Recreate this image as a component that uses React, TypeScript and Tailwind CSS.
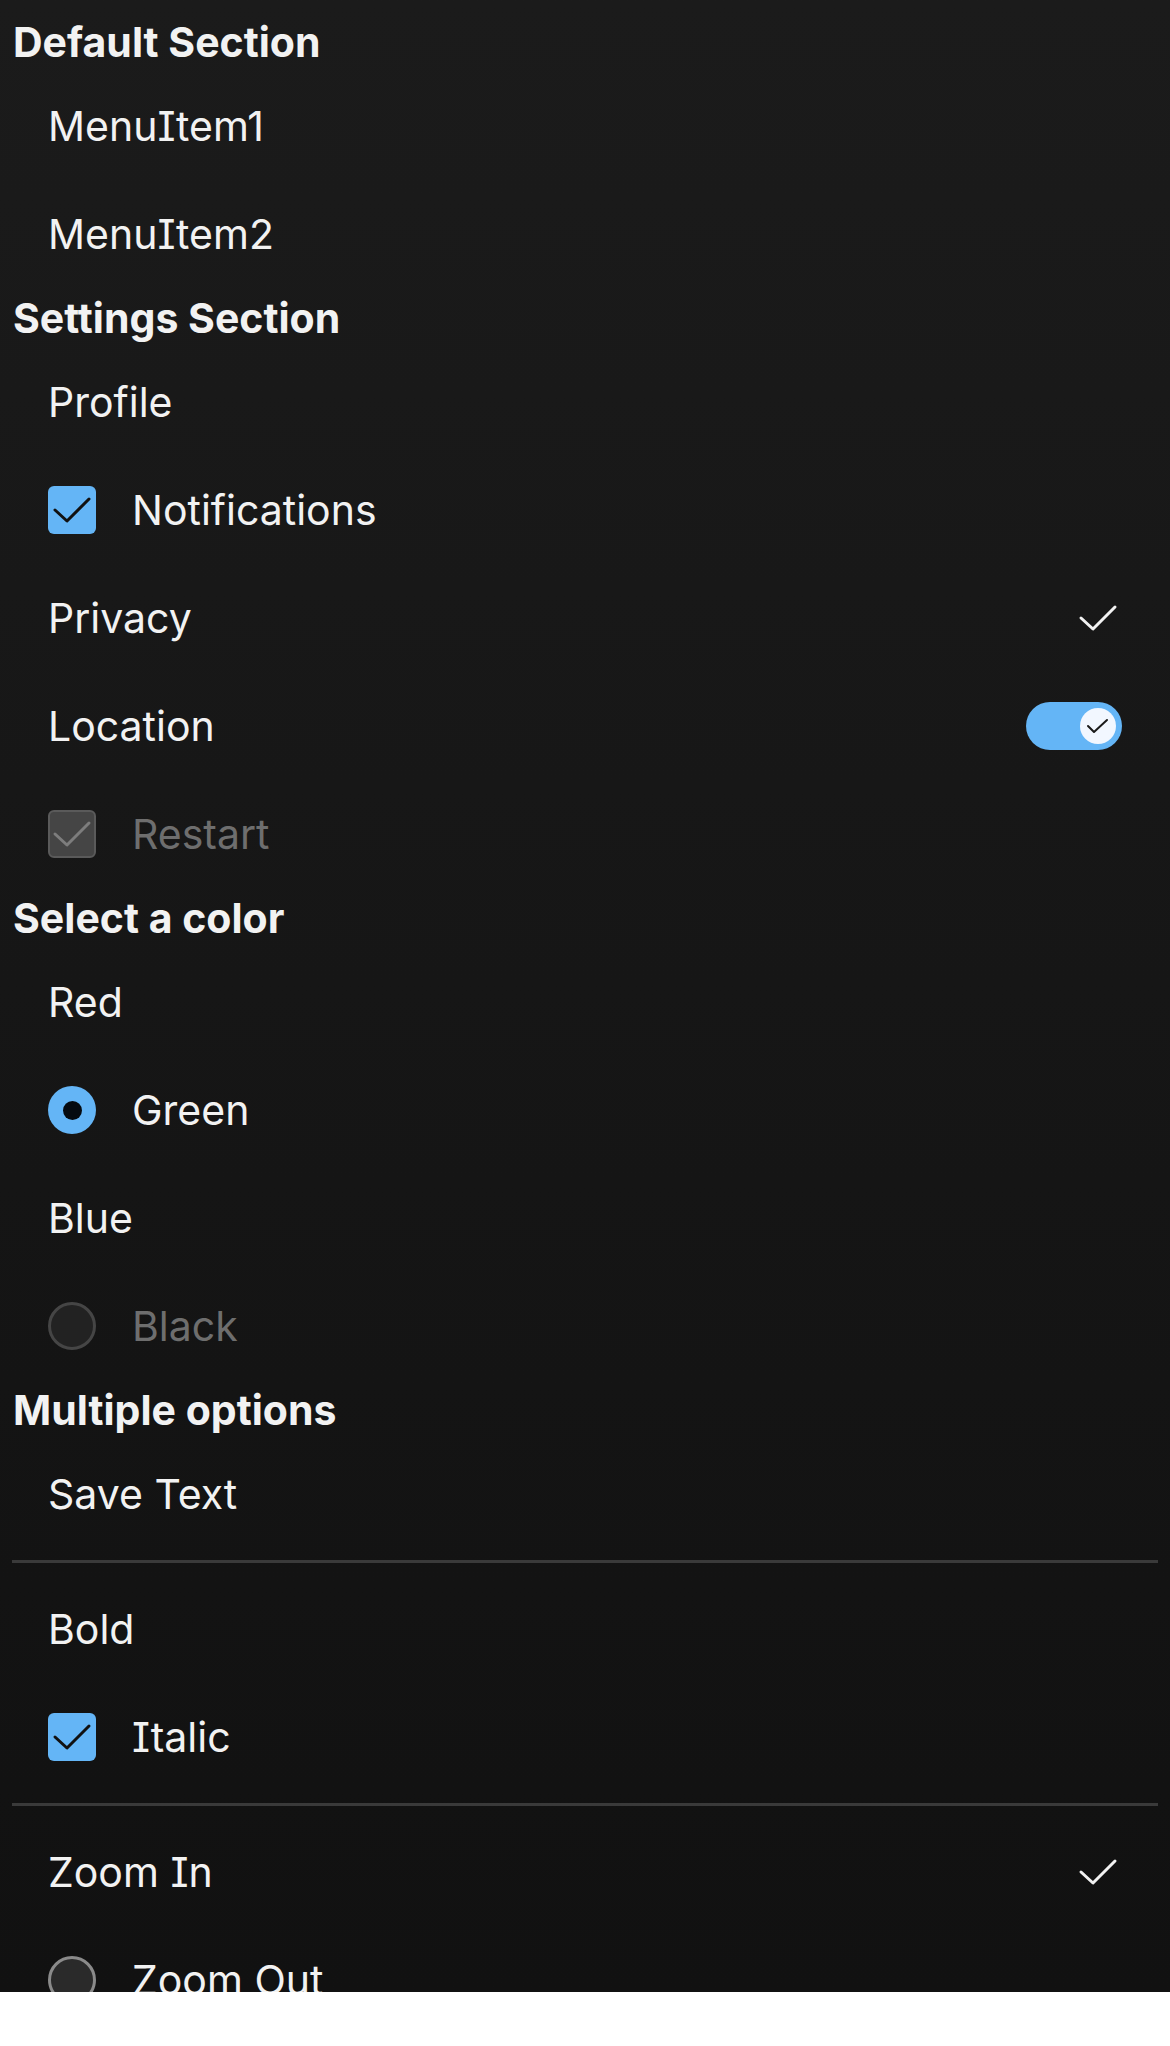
import type { ReactNode } from 'react';

type Control = 'none' | 'checkbox' | 'checkboxDisabled' | 'radio' | 'radioDisabled' | 'radioOff';
type Trailing = 'none' | 'check' | 'switch';

interface RowProps {
  label: string;
  lead?: Control;
  trail?: Trailing;
  disabled?: boolean;
}

// Check drawn in a 48px box
const CheckMark = ({ color, width = 3 }: { color: string; width?: number }) => (
  <svg viewBox="0 0 48 48" className="h-12 w-12" fill="none">
    <path d="M7 24 L19 35 L41 13" stroke={color} strokeWidth={width} strokeLinecap="round" strokeLinejoin="round" />
  </svg>
);

const LeadControl = ({ type }: { type: Control }) => {
  if (type === 'checkbox') {
    return (
      <div className="h-12 w-12 shrink-0 rounded-[6px] bg-[#64b5f6]">
        <CheckMark color="#111111" />
      </div>
    );
  }
  if (type === 'checkboxDisabled') {
    return (
      <div className="h-12 w-12 shrink-0 rounded-[6px] border-2 border-[#5a5a5a] bg-[#454545]">
        <svg viewBox="0 0 44 44" className="h-11 w-11" fill="none">
          <path d="M5 22 L17 33 L39 11" stroke="#7d7d7d" strokeWidth={3} strokeLinecap="round" strokeLinejoin="round" />
        </svg>
      </div>
    );
  }
  if (type === 'radio') {
    return (
      <div className="flex h-12 w-12 shrink-0 items-center justify-center rounded-full bg-[#64b5f6]">
        <div className="h-[19px] w-[19px] rounded-full bg-[#050a10]" />
      </div>
    );
  }
  if (type === 'radioDisabled') {
    return <div className="h-12 w-12 shrink-0 rounded-full border-[3px] border-[#454545] bg-[#222222]" />;
  }
  if (type === 'radioOff') {
    return <div className="h-12 w-12 shrink-0 rounded-full border-[3px] border-[#8a8a8a] bg-[#2a2a2a]" />;
  }
  return null;
};

const Switch = () => (
  <div className="flex h-12 w-24 items-center justify-end rounded-full bg-[#64b5f6] pr-[6px]">
    <div className="flex h-9 w-9 items-center justify-center rounded-full bg-[#f2f7ff]">
      <svg viewBox="0 0 36 36" className="h-9 w-9" fill="none">
        <path d="M8 18 L14 24 L27 12" stroke="#1a1a1a" strokeWidth={2} strokeLinecap="round" strokeLinejoin="round" />
      </svg>
    </div>
  </div>
);

const Row = ({ label, lead = 'none', trail = 'none', disabled }: RowProps) => (
  <div className="flex h-[108px] items-center pl-12 pr-12">
    {lead !== 'none' && <LeadControl type={lead} />}
    <span
      className={`text-[41px] leading-none ${lead !== 'none' ? 'ml-[36px]' : ''} ${
        disabled ? 'text-[#6e6e6e]' : 'text-[#f2f2f2]'
      }`}
    >
      {label}
    </span>
    <div className="flex-1" />
    {trail === 'check' && <CheckMark color="#f2f2f2" />}
    {trail === 'switch' && <Switch />}
  </div>
);

const Heading = ({ children }: { children: ReactNode }) => (
  <div className="flex h-[60px] items-center pl-[13px] text-[41px] font-bold leading-none text-[#f2f2f2]">
    {children}
  </div>
);

const Divider = () => <div className="mx-3 my-3 h-[3px] bg-[#3a3a3a]" />;

export default function App() {
  return (
    <div className="h-[1992px] overflow-hidden bg-linear-to-b from-[#1b1b1b] to-[#111111] pt-3 font-['Inter','Noto_Sans',sans-serif] [font-feature-settings:'cv08']">
      <Heading>Default Section</Heading>
      <Row label="MenuItem1" />
      <Row label="MenuItem2" />

      <Heading>Settings Section</Heading>
      <Row label="Profile" />
      <Row label="Notifications" lead="checkbox" />
      <Row label="Privacy" trail="check" />
      <Row label="Location" trail="switch" />
      <Row label="Restart" lead="checkboxDisabled" disabled />

      <Heading>Select a color</Heading>
      <Row label="Red" />
      <Row label="Green" lead="radio" />
      <Row label="Blue" />
      <Row label="Black" lead="radioDisabled" disabled />

      <Heading>Multiple options</Heading>
      <Row label="Save Text" />
      <Divider />
      <Row label="Bold" />
      <Row label="Italic" lead="checkbox" />
      <Divider />
      <Row label="Zoom In" trail="check" />
      <Row label="Zoom Out" lead="radioOff" />
    </div>
  );
}
